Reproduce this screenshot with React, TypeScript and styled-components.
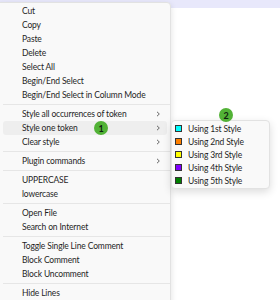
import React from 'react';
import styled, { createGlobalStyle } from 'styled-components';

const GlobalStyle = createGlobalStyle`
  html, body {
    margin: 0;
    padding: 0;
    background: #ffffff;
  }
  body {
    font-family: Lato, 'Liberation Sans', sans-serif;
  }
`;

const Page = styled.div`
  position: relative;
  width: 280px;
  height: 300px;
  overflow: hidden;
  background: #ffffff;
`;

const TopStrip = styled.div`
  height: 8px;
  background: #e8e8fb;
`;

const Menu = styled.div`
  position: absolute;
  top: 2px;
  left: -4px;
  width: 175px;
  padding: 1px 0 0 0;
  box-sizing: border-box;
  height: 310px;
  background: #f9f9f9;
  border: 1px solid #e2e2e2;
  border-radius: 4px;
  box-shadow: 0 2px 6px rgba(0, 0, 0, 0.12);
`;

const Row = styled.div<{ $active?: boolean }>`
  display: flex;
  align-items: center;
  justify-content: space-between;
  height: 14px;
  margin: 0 3px 0 6px;
  padding: 0 6px 0 19px;
  border-radius: 3px;
  background: ${p => (p.$active ? '#eeeeee' : 'transparent')};
  font-size: 8.5px;
  letter-spacing: -0.15px;
  color: #1f1f1f;
  white-space: nowrap;
`;

const Chevron = styled.svg`
  width: 6px;
  height: 6px;
`;

const Separator = styled.div`
  height: 1px;
  margin: 2px 0 2px 6px;
  background: #e6e6e6;
`;

const SubMenu = styled.div`
  position: absolute;
  top: 120px;
  left: 171px;
  width: 99px;
  padding: 1px 0;
  box-sizing: border-box;
  background: #f9f9f9;
  border: 1px solid #e2e2e2;
  border-radius: 4px;
  box-shadow: 0 3px 8px rgba(0, 0, 0, 0.14);
`;

const SubRow = styled.div`
  display: flex;
  align-items: center;
  gap: 6px;
  height: 13px;
  padding-left: 3px;
  font-size: 8.5px;
  letter-spacing: -0.15px;
  color: #1f1f1f;
  white-space: nowrap;
`;

const Swatch = styled.span<{ $color: string }>`
  width: 5px;
  height: 5px;
  background: ${p => p.$color};
  border: 1px solid #333333;
`;

const Badge = styled.div<{ $x: number; $y: number }>`
  position: absolute;
  left: ${p => p.$x - 7}px;
  top: ${p => p.$y - 7}px;
  width: 14px;
  height: 14px;
  border-radius: 50%;
  background: #52b236;
  color: #102010;
  font-size: 9px;
  font-weight: 700;
  display: flex;
  align-items: center;
  justify-content: center;
`;

type Item = { label: string; sub?: boolean; active?: boolean } | 'sep';

const items: Item[] = [
  { label: 'Cut' },
  { label: 'Copy' },
  { label: 'Paste' },
  { label: 'Delete' },
  { label: 'Select All' },
  { label: 'Begin/End Select' },
  { label: 'Begin/End Select in Column Mode' },
  'sep',
  { label: 'Style all occurrences of token', sub: true },
  { label: 'Style one token', sub: true, active: true },
  { label: 'Clear style', sub: true },
  'sep',
  { label: 'Plugin commands', sub: true },
  'sep',
  { label: 'UPPERCASE' },
  { label: 'lowercase' },
  'sep',
  { label: 'Open File' },
  { label: 'Search on Internet' },
  'sep',
  { label: 'Toggle Single Line Comment' },
  { label: 'Block Comment' },
  { label: 'Block Uncomment' },
  'sep',
  { label: 'Hide Lines' },
];

const styles = [
  { label: 'Using 1st Style', color: '#00ffff' },
  { label: 'Using 2nd Style', color: '#ff8000' },
  { label: 'Using 3rd Style', color: '#ffff00' },
  { label: 'Using 4th Style', color: '#8000ff' },
  { label: 'Using 5th Style', color: '#008000' },
];

const App = () => (
  <Page>
    <GlobalStyle />
    <TopStrip />
    <Menu>
      {items.map((it, i) =>
        it === 'sep' ? (
          <Separator key={i} />
        ) : (
          <Row key={i} $active={it.active}>
            <span>{it.label}</span>
            {it.sub && (
              <Chevron viewBox="0 0 6 6">
                <path d="M2 0.8 L4.3 3 L2 5.2" fill="none" stroke="#555" strokeWidth="0.9" />
              </Chevron>
            )}
          </Row>
        )
      )}
    </Menu>
    <SubMenu>
      {styles.map(s => (
        <SubRow key={s.label}>
          <Swatch $color={s.color} />
          <span>{s.label}</span>
        </SubRow>
      ))}
    </SubMenu>
    <Badge $x={101} $y={128}>1</Badge>
    <Badge $x={226} $y={115}>2</Badge>
  </Page>
);

export default App;
